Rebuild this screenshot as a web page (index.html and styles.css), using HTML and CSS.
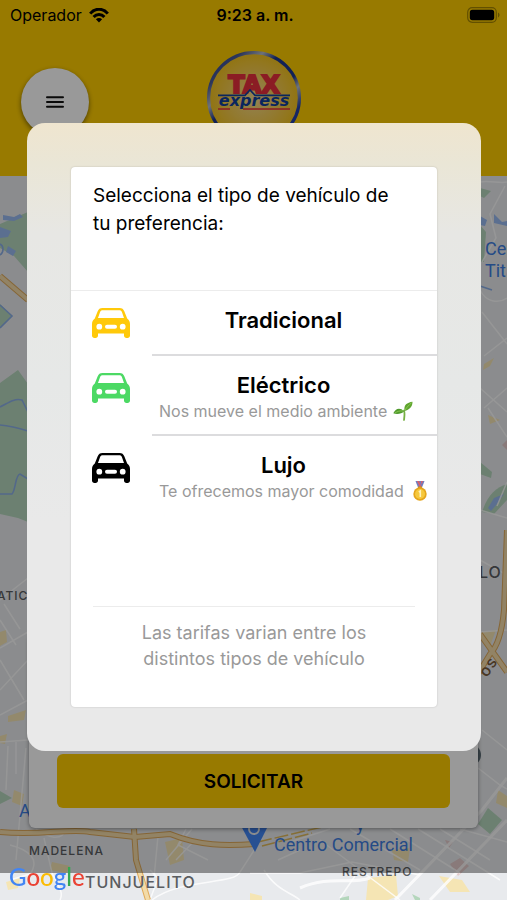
FILE: index.html
```html
<!DOCTYPE html>
<html lang="es">
<head>
    <meta charset="UTF-8">
    <meta name="viewport" content="width=device-width, initial-scale=1">
    <title>Tax Express</title>
    <link rel="stylesheet" href="styles.css">
</head>
<body>

<div class="app">
    <header class="header">
        <div class="status-bar">
            <div class="carrier">
                <span>Operador</span>
                <svg width="20" height="15" viewBox="0 0 20 15">
                    <g fill="none" stroke="#000" stroke-width="3">
                        <path d="M1.2 5.6C6-.2 14-.2 18.8 5.6"/>
                        <path d="M4.6 9C7.6 5.6 12.4 5.6 15.4 9"/>
                    </g>
                    <path d="M10 14.6L6.9 11.3C8.6 9.6 11.4 9.6 13.1 11.3Z"/>
                </svg>
            </div>
            <div class="clock">9:23 a. m.</div>
            <svg class="battery" width="33" height="16" viewBox="0 0 33 16">
                <rect x=".7" y=".7" width="28.6" height="14.6" rx="4.5" fill="none" stroke="#a58500" stroke-width="1.2"/>
                <rect x="2.8" y="2.8" width="24.4" height="10.4" rx="2.6"/>
                <path d="M31 5.6C33 6.4 33 9.6 31 10.4Z" fill="#a58500"/>
            </svg>
        </div>
        <div class="toolbar">
            <button class="menu-btn" type="button" aria-label="Menú">
                <svg width="18" height="12" viewBox="0 0 18 12">
                    <path d="M1 1.2H17M1 6H17M1 10.8H17" stroke="#111" stroke-width="2" stroke-linecap="round"/>
                </svg>
            </button>
            <svg class="logo" width="94" height="94" viewBox="0 0 94 94">
                <defs>
                    <radialGradient id="disc">
                        <stop offset="0" stop-color="#f5d98c"/>
                        <stop offset=".6" stop-color="#f4ca4c"/>
                        <stop offset="1" stop-color="#f2c21c"/>
                    </radialGradient>
                    <linearGradient id="ring" x1="0" y1="0" x2="1" y2="1">
                        <stop offset="0" stop-color="#1e3a9a"/>
                        <stop offset=".18" stop-color="#4a5a98"/>
                        <stop offset=".3" stop-color="#b8bec8"/>
                        <stop offset=".4" stop-color="#1d3790"/>
                        <stop offset=".6" stop-color="#1d3790"/>
                        <stop offset=".68" stop-color="#b8bec8"/>
                        <stop offset=".8" stop-color="#2340a8"/>
                        <stop offset="1" stop-color="#2340a8"/>
                    </linearGradient>
                </defs>
                <circle cx="47" cy="47" r="45.4" fill="url(#disc)" stroke="url(#ring)" stroke-width="3.2"/>
                <text class="logo-top" x="47" y="42" text-anchor="middle">TAX</text>
                <path d="M11 44.400H38L43 39L48 44.400H83" fill="none" stroke="#12409c" stroke-width="1.600"/>
                <text class="logo-bottom" x="47" y="55" text-anchor="middle">express</text>
                <path d="M11 58H23M36 58H83" stroke="#e8303c" stroke-width="1.600"/>
            </svg>
        </div>
    </header>

    <main class="main">
        <svg class="map" viewBox="0 176 507 724" preserveAspectRatio="xMidYMid slice">
            <!-- parks -->
            <g fill="#b4d6bc">
                <path d="M0 224L28 212V272L14 256L0 248Z"/>
                <path d="M0 304L12 316L0 328Z"/>
                <path d="M0 383L18 370L28 384V522L18 518L0 514Z"/>
                <path d="M0 791L12 798L0 804Z"/>
                <path d="M480 188L491 191L484 198L480 196Z"/>
                <path d="M480 225L486 232L484 262L480 262Z"/>
                <path d="M480 462L492 472L491 478L480 474Z"/>
                <path d="M482 512C488 494 496 488 507 484V500L494 514Z"/>
                <path d="M488 808L502 820L490 834L478 824Z"/>
                <path d="M340 898L349 896V900H340ZM412 894L420 898V900H415Z"/>
            </g>
            <!-- water -->
            <g fill="#98b9f0">
                <path d="M3 215L14 217L20 214L23 217L14 221L3 220Z"/>
                <path d="M0 227L11 231L8 237L0 238Z"/>
                <path d="M8 246L16 251L13 256L6 252Z"/>
                <path d="M494 214L502 222L507 221V226L494 223Z"/>
                <path d="M480 216L487 220L485 226L480 225Z"/>
                <path d="M488 508L494 498L504 494L497 504L491 511Z"/>
            </g>
            <g fill="none" stroke="#8aaee6" stroke-width="1.600">
                <path d="M0 244C4 246 4 252 0 255M0 305L12 316L0 328"/>
                <path d="M0 407C8 403 14 398 22 400L28 412"/>
                <path d="M0 425C10 426 18 428 28 431"/>
                <path d="M0 494H12C16 490 15 475 20 474L28 479"/>
                <path d="M480 286L492 290"/>
            </g>
            <!-- built-up blocks -->
            <g fill="#f5e5b4">
                <path d="M0 632L6 630L7 642L0 646Z"/>
                <path d="M8 716L26 710L24 720L8 722Z"/>
                <path d="M0 736L7 734L5 744L0 743Z"/>
                <path d="M14 790L24 794L22 806L12 802Z"/>
                <path d="M165 842L182 838L184 860L170 865Z"/>
                <path d="M52 862L70 866L66 873L50 870Z"/>
                <path d="M6 882L20 878L18 888L8 890Z"/>
                <path d="M368 878L396 875L398 896L388 900H366Z"/>
                <path d="M392 850L410 848L408 862L394 860Z"/>
                <path d="M439 876L462 880L470 892L450 892Z"/>
                <path d="M250 893L262 896V900H250Z"/>
                <path d="M498 790L507 796V808L496 803Z"/>
                <path d="M484 364L494 358L490 366L483 370Z"/>
                <path d="M488 415L500 420L490 424Z"/>
                <path d="M482 632L496 630L490 646L482 640Z"/>
            </g>
            <g fill="#e4cbcb">
                <path d="M450 864L460 858L469 866L458 876Z"/>
                <path d="M445 840L453 842L449 848Z"/>
                <path d="M502 445L507 440V450Z"/>
            </g>
            <!-- streets -->
            <g class="streets" fill="none" stroke="#fff" stroke-width="1.500">
                <path d="M0 648L28 632M0 660L24 700M0 715L28 700M0 620L16 645M4 604L20 629M28 578L0 600"/>
                <path d="M0 742L28 740M8 746L6 790M16 742V774M26 748L16 860"/>
                <path d="M0 690L28 660M10 845C30 850 40 860 30 874L10 880"/>
                <path d="M36 829C48 838 62 842 66 829M44 838L52 873C58 886 64 892 60 900"/>
                <path d="M158 836L154 878M186 829L178 845L208 860M192 829L166 860"/>
                <path d="M152 900C180 878 235 885 240 872L262 838"/>
                <path d="M150 870L158 878L150 900M195 840L176 860"/>
                <path d="M264 870C276 890 290 892 300 900M250 873H300L352 862L420 875"/>
                <path d="M320 840L400 900M350 829L420 870M390 829L460 873M418 829L500 880"/>
                <path d="M290 842L330 829M278 860L300 850M355 876L340 898"/>
                <path d="M480 182C490 180 500 184 507 182M505 186L490 214L496 238L482 262"/>
                <path d="M480 290C486 302 498 304 507 298M482 312L507 344M484 356L507 338M480 388L507 412M507 388L484 408M488 408L507 437"/>
                <path d="M480 510L507 518M497 506L507 482M480 560L507 575M480 632L507 630M482 730L507 750"/>
                <path d="M478 768L500 785L507 789M440 829L490 860M460 829L507 842"/>
            </g>
            <g class="streets" fill="none" stroke="#fff" stroke-width="3">
                <path d="M507 778L482 810L395 900"/>
                <path d="M507 820L430 900"/>
                <path d="M300 888C330 875 350 885 370 878"/>
            </g>
            <!-- main roads -->
            <g fill="none" stroke="#dfa95a" stroke-width="6">
                <path d="M0 276L28 300"/>
                <path d="M0 832C40 836 70 828 90 832L135 837L170 834C200 846 225 846 255 844"/>
                <path d="M134 829L136 860L148 900"/>
                <path d="M507 530L504 610C502 632 498 646 490 654L478 674M480 634L507 672"/>
                <path d="M507 586V606" stroke-width="10"/>
            </g>
            <g fill="none" stroke="#f3dba8" stroke-width="4">
                <path d="M0 276L28 300"/>
                <path d="M0 832C40 836 70 828 90 832L135 837L170 834C200 846 225 846 255 844"/>
                <path d="M134 829L136 860L148 900"/>
                <path d="M507 530L504 610C502 632 498 646 490 654L478 674M480 634L507 672"/>
            </g>
            <path d="M258 842L322 827M262 846L312 833" fill="none" stroke="#dfb95a" stroke-width="1.500" stroke-dasharray="14 3"/>
            <path d="M240 824H269L255 852Z" fill="#4285f4"/>
            <circle cx="254" cy="829" r="5" fill="none" stroke="#e8eaed" stroke-width="2"/>
            <circle cx="470" cy="755" r="11" fill="#5f6f78"/>
            <!-- place names -->
            <g class="place">
                <text x="485" y="255">Centro</text>
                <text x="485" y="277">Titán</text>
                <text x="19" y="817">A</text>
                <text x="274" y="851">Centro Comercial</text>
                <text x="356" y="831">y</text>
            </g>
            <g class="district">
                <text x="-3" y="600">ATIC</text>
                <text x="29" y="855">MADELENA</text>
                <text x="342" y="876">RESTREPO</text>
                <text class="district-big" x="85" y="888">TUNJUELITO</text>
                <text class="district-big" x="479" y="578">LO</text>
                <text class="street" transform="translate(487 678) rotate(-56)">os</text>
            </g>
        </svg>
        <div class="request-card">
            <button class="request-btn" type="button">SOLICITAR</button>
        </div>
    </main>
</div>

<a class="google" href="#"><span class="g-blue">G</span><span class="g-red">o</span><span class="g-yellow">o</span><span class="g-blue">g</span><span class="g-green">l</span><span class="g-red">e</span></a>

<svg class="sprite">
    <symbol id="car" viewBox="0 0 38 30">
        <path fill="currentColor" fill-rule="evenodd" d="M10.500 0H27.500C30 0 31.500 1.200 32.300 3.300L35.200 10.500C37.200 12 38 13.800 38 16V27.500C38 29 37 30 35.500 30H34.500C33 30 32 29 32 27.500V25.500H6V27.500C6 29 5 30 3.500 30H2.500C1 30 0 29 0 27.500V16C0 13.800 .8 12 2.800 10.500L5.700 3.300C6.500 1.200 8 0 10.500 0ZM10.800 2.200C9.300 2.200 8.600 2.800 8.100 4.100L6 10H32L29.900 4.100C29.400 2.800 28.700 2.200 27.200 2.200ZM7.300 15.800A2.900 2.900 0 1 0 7.300 21.600A2.900 2.900 0 1 0 7.300 15.800ZM30.700 15.800A2.900 2.900 0 1 0 30.700 21.600A2.900 2.900 0 1 0 30.700 15.800ZM15 16.800A2 2 0 0 0 15 20.800H23A2 2 0 0 0 23 16.800Z"/>
    </symbol>
</svg>

<div class="overlay">
    <div class="modal" role="dialog" aria-labelledby="modal-title">
        <div class="card">
            <div class="card-header" id="modal-title">Selecciona el tipo de vehículo de tu preferencia:</div>

            <div class="options">
                <button class="option" type="button">
                    <svg class="car car-yellow"><use href="#car"/></svg>
                    <span class="option-body">
                        <span class="option-title">Tradicional</span>
                    </span>
                </button>
                <button class="option" type="button">
                    <svg class="car car-green"><use href="#car"/></svg>
                    <span class="option-body">
                        <span class="option-title">Eléctrico</span>
                        <span class="option-note">Nos mueve el medio ambiente
                            <svg width="20" height="20" viewBox="0 0 20 20">
                                <path d="M11 19C11.500 15 12 12 11 9.500" fill="none" stroke="#76b043" stroke-width="1.800" stroke-linecap="round"/>
                                <path d="M11.500 10C10.500 4 14 1.500 19.500 .8C19.500 6 16.500 8.700 11.500 10Z" fill="#5fa52f"/>
                                <path d="M11 10.300C9 13 3.500 13.800 .3 12.300C2.300 7.500 7 6 11 10.300Z" fill="#4f9a2c"/>
                                <path d="M12 9C14 6 16 4 18.500 1.800M10 10C7 9.500 4 10.500 2 12" fill="none" stroke="#98cf5a" stroke-width=".8"/>
                            </svg>
                        </span>
                    </span>
                </button>
                <button class="option" type="button">
                    <svg class="car"><use href="#car"/></svg>
                    <span class="option-body">
                        <span class="option-title">Lujo</span>
                        <span class="option-note">Te ofrecemos mayor comodidad
                            <svg width="20" height="20" viewBox="0 0 20 20">
                                <path d="M5.500 0H14.500L12 6.500H8Z" fill="#6f7fc0"/>
                                <path d="M7 0H9L11.500 5.500L10 7ZM11 0H13L11.500 4Z" fill="#d9606c"/>
                                <rect x="8" y="5.500" width="4" height="2" fill="#c98f1c"/>
                                <circle cx="10" cy="13" r="6.700" fill="#e5a51c"/>
                                <circle cx="10" cy="13" r="5" fill="#f6c83c"/>
                                <path d="M8.800 11L10.300 10V16" fill="none" stroke="#fff0b8" stroke-width="1.600"/>
                            </svg>
                        </span>
                    </span>
                </button>
            </div>

            <div class="card-footer">Las tarifas varian entre los distintos tipos de vehículo</div>
        </div>
    </div>
</div>

</body>
</html>
```
FILE: styles.css
```css
* {
    box-sizing: border-box;
}

body {
    margin: 0;
    font-family: Inter, "Liberation Sans", sans-serif;
    color: #000;
}

button {
    font-family: inherit;
    color: inherit;
    border: none;
    padding: 0;
    cursor: pointer;
}

.app {
    display: flex;
    flex-direction: column;
    min-height: 100vh;
}

/* header */
.header {
    background-color: #fecc00;
    padding-bottom: 31px;
}

.status-bar {
    display: grid;
    grid-template-columns: 1fr auto 1fr;
    align-items: center;
    height: 30px;
    padding: 0 7px 0 10px;
    font-size: 16px;
}

.carrier {
    display: flex;
    align-items: center;
    gap: 7px;
}

.clock {
    font-weight: 600;
}

.battery {
    justify-self: end;
}

.toolbar {
    display: grid;
    grid-template-columns: 1fr auto 1fr;
    align-items: center;
    padding: 21px 21px 0;
}

.menu-btn {
    display: flex;
    align-items: center;
    justify-content: center;
    width: 68px;
    height: 68px;
    margin-top: 8px;
    border-radius: 50%;
    background-color: #fff;
    box-shadow: 0 2px 5px rgba(0, 0, 0, 0.5);
}

.logo {
    display: block;
}

.logo-top {
    font: bold 24px "DejaVu Sans", sans-serif;
    fill: #e8303c;
    stroke: #e8303c;
    stroke-width: 2px;
}

.logo-bottom {
    font: italic bold 16px "DejaVu Sans", sans-serif;
    fill: #12409c;
}

/* map */
.main {
    flex: 1;
    display: flex;
    flex-direction: column;
    justify-content: flex-end;
    position: relative;
    padding: 0 29px 72px;
    overflow: hidden;
}

.map {
    position: absolute;
    top: 0;
    left: 0;
    width: 100%;
    height: 100%;
    background-color: #e8eaed;
}

.streets {
    opacity: 0.8;
}

.place {
    font-family: Roboto, sans-serif;
    font-size: 18px;
    fill: #3f7de0;
}

.district {
    font-size: 12px;
    font-weight: 500;
    letter-spacing: 1px;
    fill: #5a5d61;
}

.district-big {
    font-size: 16px;
}

.street {
    font-size: 16px;
    fill: #7a5c3c;
}

.request-card {
    position: relative;
    padding: 120px 28px 20px;
    border-radius: 6px;
    background-color: #fff;
    box-shadow: 0 1px 4px rgba(0, 0, 0, 0.4);
}

.request-btn {
    display: block;
    width: 100%;
    height: 54px;
    border-radius: 6px;
    background-color: #fecc00;
    font-size: 19px;
    font-weight: 600;
}

.google {
    position: fixed;
    left: 9px;
    bottom: 8px;
    z-index: 2;
    font: 500 24px/30px Lato, sans-serif;
    text-decoration: none;
}

.g-blue {
    color: #4285f4;
}

.g-red {
    color: #ea4335;
}

.g-yellow {
    color: #fbbc05;
}

.g-green {
    color: #34a853;
}

/* modal */
.sprite {
    position: absolute;
    width: 0;
    height: 0;
}

.overlay {
    position: fixed;
    top: 0;
    left: 0;
    right: 0;
    bottom: 27px;
    padding: 123px 26px 0 27px;
    background-color: rgba(0, 0, 0, 0.4);
}

.modal {
    padding: 44px;
    border-radius: 18px;
    background: linear-gradient(#efe5cf, #eae6d6 40px, #e7e7e4 110px, #e6e8e7 260px, #e9e9e9 400px);
}

.card {
    border-radius: 4px;
    background-color: #fff;
    box-shadow: 0 0 2px rgba(0, 0, 0, 0.2);
}

.card-header {
    min-height: 124px;
    padding: 15px 40px 15px 22px;
    border-bottom: 1px solid #ececec;
    font-size: 19px;
    line-height: 28px;
}

.options {
    min-height: 315px;
}

.option {
    display: flex;
    align-items: flex-start;
    gap: 22px;
    width: 100%;
    padding-left: 21px;
    background: none;
}

.car {
    flex: none;
    width: 38px;
    height: 30px;
    margin-top: 17px;
}

.car-yellow {
    color: #ffc90a;
}

.car-green {
    color: #4cd964;
}

.option-body {
    flex: 1;
    min-height: 65px;
    padding: 14px 0 12px 7px;
    border-bottom: 2px solid #dcdcde;
    text-align: left;
}

.option:last-child .option-body {
    border-bottom: none;
}

.option-title {
    display: block;
    padding-right: 29px;
    font-size: 22px;
    font-weight: 600;
    line-height: 30px;
    text-align: center;
}

.option-note {
    display: flex;
    align-items: center;
    gap: 6px;
    font-size: 16px;
    line-height: 22px;
    color: #999;
    white-space: nowrap;
}

.card-footer {
    margin: 0 22px;
    padding: 13px 40px 35px;
    border-top: 1px solid #ececec;
    font-size: 18px;
    line-height: 26px;
    text-align: center;
    color: #999;
}
```
